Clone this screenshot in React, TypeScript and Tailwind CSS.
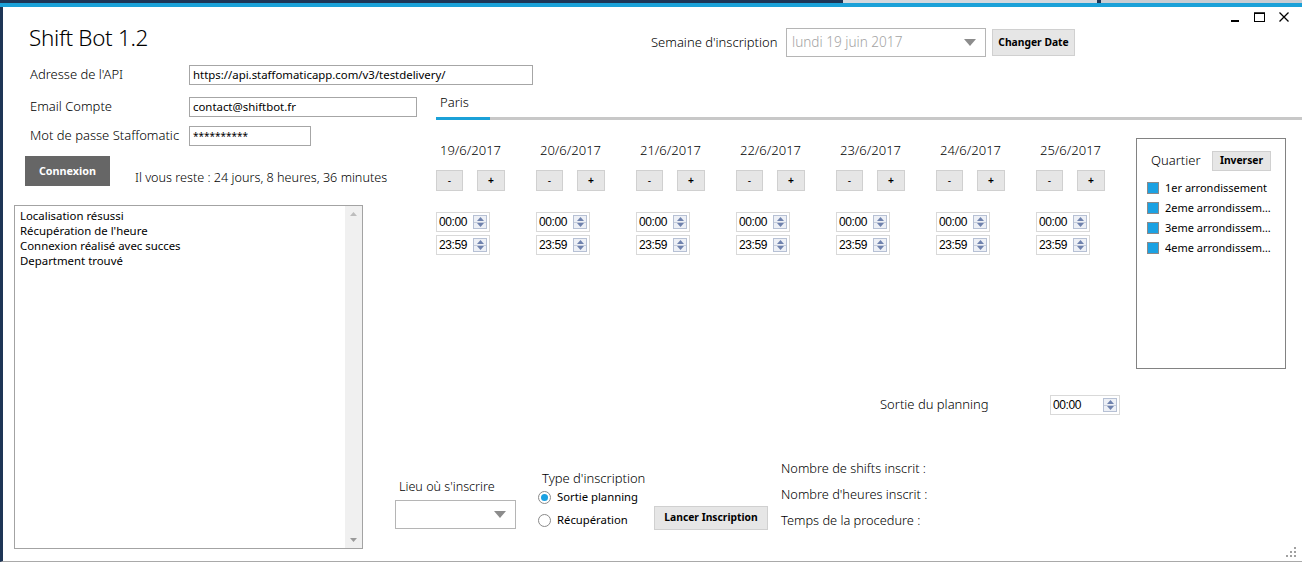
import type { ReactNode } from "react";

const days = ["19/6/2017", "20/6/2017", "21/6/2017", "22/6/2017", "23/6/2017", "24/6/2017", "25/6/2017"];
const quartiers = ["1er arrondissement", "2eme arrondissement", "3eme arrondissement", "4eme arrondissement"];
const logLines = ["Localisation résussi", "Récupération de l'heure", "Connexion réalisé avec succes", "Department trouvé"];

function SpinArrows() {
  return (
    <div className="ml-auto mr-[2px] flex h-[14px] w-[14px] flex-col border border-[#b6c0d4] bg-[#edf0f6]">
      <div className="flex flex-1 items-center justify-center border-b border-[#c3cbdb]">
        <svg width="7" height="4" viewBox="0 0 7 4">
          <path d="M0 4L3.5 0L7 4Z" fill="#6f82ae" />
        </svg>
      </div>
      <div className="flex flex-1 items-center justify-center">
        <svg width="7" height="4" viewBox="0 0 7 4">
          <path d="M0 0L3.5 4L7 0Z" fill="#6f82ae" />
        </svg>
      </div>
    </div>
  );
}

function TimeBox({ value, className = "" }: { value: string; className?: string }) {
  return (
    <div className={`flex h-[20px] shrink-0 items-center border border-[#d9d9d9] bg-white pl-[2px] ${className}`}>
      <span className="font-['Liberation_Sans',sans-serif] text-[12px] tracking-[-0.4px] text-black">{value}</span>
      <SpinArrows />
    </div>
  );
}

function Btn({ children, className = "" }: { children: ReactNode; className?: string }) {
  return (
    <button
      type="button"
      className={`flex shrink-0 items-center justify-center border border-[#d0d0d0] bg-[#e6e6e6] text-[10.3px] font-bold text-black ${className}`}
    >
      {children}
    </button>
  );
}

function ComboArrow() {
  return (
    <svg width="12" height="7" viewBox="0 0 12 7" aria-hidden="true">
      <path d="M0 0H12L6 7Z" fill="#8c8c8c" />
    </svg>
  );
}

function Radio({ checked, label }: { checked?: boolean; label: string }) {
  return (
    <div className="flex h-[20px] items-center">
      <span className="flex h-[13px] w-[13px] items-center justify-center rounded-full border border-[#8a8a8a] bg-white">
        {checked && <span className="h-[7px] w-[7px] rounded-full bg-[#1ba1e2]" />}
      </span>
      <span className="ml-[6px] whitespace-nowrap text-[11.3px] text-black">{label}</span>
    </div>
  );
}

export default function App() {
  return (
    <div className="relative h-[563px] w-[1302px] overflow-hidden bg-white font-['Noto_Sans','Open_Sans',sans-serif] text-black">
      {/* bureau derrière la fenêtre */}
      <div className="flex h-[3px]">
        <div className="w-[843px] bg-[#1e3556]" />
        <div className="w-[254px] bg-[#d4d8de]" />
        <div className="w-[4px] bg-[#1e3556]" />
        <div className="flex-1 bg-[#c9cdd3]" />
      </div>
      <div className="h-[4px] bg-[#1ba1d8]" />

      <div className="flex h-[555px] border-b border-l-[3px] border-b-[#a9a9a9] border-l-[#1e3556]">
        {/* colonne gauche */}
        <div className="flex w-[377px] shrink-0 flex-col">
          <h1 className="ml-[26px] mt-[15px] text-[22.4px] font-light leading-[32px] tracking-[-0.3px]">Shift Bot 1.2</h1>

          <div className="mt-[11px] flex h-[20px] items-center">
            <span className="ml-[27px] w-[159px] shrink-0 whitespace-nowrap text-[13px] font-light">Adresse de l'API</span>
            <div className="flex h-[20px] w-[344px] shrink-0 items-center border border-[#a6a6a6] px-[3px] text-[11.4px]">
              https://api.staffomaticapp.com/v3/testdelivery/
            </div>
          </div>
          <div className="mt-[12px] flex h-[20px] items-center">
            <span className="ml-[27px] w-[159px] shrink-0 whitespace-nowrap text-[13px] font-light">Email Compte</span>
            <div className="flex h-[20px] w-[228px] shrink-0 items-center border border-[#a6a6a6] px-[3px] text-[11.4px]">
              contact@shiftbot.fr
            </div>
          </div>
          <div className="mt-[9px] flex h-[20px] items-center">
            <span className="ml-[27px] w-[159px] shrink-0 whitespace-nowrap text-[13px] font-light">Mot de passe Staffomatic</span>
            <div className="flex h-[20px] w-[122px] shrink-0 items-center border border-[#a6a6a6] px-[3px] text-[10px]">
              **********
            </div>
          </div>

          <div className="mt-[10px] flex items-start">
            <button
              type="button"
              className="ml-[22px] h-[30px] w-[85px] shrink-0 bg-[#666666] text-[10.8px] font-bold text-white"
            >
              Connexion
            </button>
            <span className="ml-[25px] mt-[12px] whitespace-nowrap text-[12.65px] font-light leading-[18px]">
              Il vous reste : 24 jours, 8 heures, 36 minutes
            </span>
          </div>

          <div className="ml-[11px] mt-[19px] flex h-[344px] w-[349px] border border-[#a3a3a3]">
            <div className="flex-1 pl-[5px] pt-[2px] text-[11.4px] leading-[15px]">
              {logLines.map((l) => (
                <div key={l}>{l}</div>
              ))}
            </div>
            <div className="flex w-[17px] flex-col items-center justify-between bg-[#f0f0f0] py-[6px]">
              <svg width="7" height="4" viewBox="0 0 7 4">
                <path d="M0 4L3.5 0L7 4Z" fill="#bdbdbd" />
              </svg>
              <svg width="7" height="4" viewBox="0 0 7 4">
                <path d="M0 0L3.5 4L7 0Z" fill="#9a9a9a" />
              </svg>
            </div>
          </div>
        </div>

        {/* partie droite */}
        <div className="flex flex-1 flex-col">
          <div className="flex h-[20px] items-center justify-end pr-[13px]">
            <svg width="8" height="10" viewBox="0 0 8 10" aria-hidden="true">
              <rect x="0" y="8" width="8" height="2" fill="#000" />
            </svg>
            <svg className="ml-[15px]" width="11" height="10" viewBox="0 0 11 10" aria-hidden="true">
              <rect x="0.5" y="1" width="10" height="8.5" fill="none" stroke="#000" strokeWidth="1" />
              <rect x="0" y="0.5" width="11" height="1.5" fill="#000" />
            </svg>
            <svg className="ml-[14px]" width="10" height="10" viewBox="0 0 10 10" aria-hidden="true">
              <path d="M0.5 0.5L9.5 9.5M9.5 0.5L0.5 9.5" stroke="#000" strokeWidth="1.3" />
            </svg>
          </div>

          <div className="mt-[1px] flex h-[29px] items-center">
            <span className="ml-[271px] w-[135px] shrink-0 whitespace-nowrap text-[13px] font-light">Semaine d'inscription</span>
            <div className="flex h-[29px] w-[200px] shrink-0 items-center border border-[#b5b5b5] pl-[5px] pr-[9px]">
              <span className="flex-1 text-[13.6px] font-light text-[#a3a3a3]">lundi 19 juin 2017</span>
              <ComboArrow />
            </div>
            <Btn className="ml-[6px] h-[27px] w-[83px]">Changer Date</Btn>
          </div>

          <div className="ml-[56px] mt-[36px] flex flex-col">
            <span className="pl-[4px] text-[13px] font-light leading-[18px]">Paris</span>
            <div className="mt-[6px] flex h-[3px]">
              <div className="w-[54px] bg-[#1ba1d8]" />
              <div className="flex-1 bg-[#c8c8c8]" />
            </div>
          </div>

          <div className="ml-[56px] flex">
            {days.map((d) => (
              <div key={d} className="flex w-[100px] shrink-0 flex-col pt-[21px]">
                <span className="pl-[4px] text-[13px] font-light leading-[18px]">{d}</span>
                <div className="mt-[11px] flex">
                  <Btn className="h-[21px] w-[27px] font-normal">-</Btn>
                  <Btn className="ml-[14px] h-[21px] w-[28px]">+</Btn>
                </div>
                <TimeBox value="00:00" className="mt-[21px] w-[54px]" />
                <TimeBox value="23:59" className="mt-[3px] w-[54px]" />
              </div>
            ))}

            <div className="mt-[18px] flex h-[231px] w-[150px] shrink-0 flex-col border border-[#828282]">
              <div className="mt-[12px] flex h-[20px] items-center">
                <span className="ml-[14px] w-[61px] text-[13px] font-light">Quartier</span>
                <Btn className="h-[20px] w-[59px]">Inverser</Btn>
              </div>
              <div className="mt-[7px] flex flex-col">
                {quartiers.map((q) => (
                  <div key={q} className="flex h-[20px] items-center pl-[10px]">
                    <span className="flex h-[12px] w-[12px] shrink-0 items-center justify-center border border-[#8a8a8a] bg-white">
                      <span className="h-[10px] w-[10px] bg-[#1ba1e2]" />
                    </span>
                    <span className="ml-[6px] w-[108px] truncate text-[11px]">{q}</span>
                  </div>
                ))}
              </div>
            </div>
          </div>

          <div className="mt-[26px] flex h-[20px] items-center">
            <span className="ml-[500px] w-[170px] shrink-0 text-[13px] font-light">Sortie du planning</span>
            <TimeBox value="00:00" className="w-[70px]" />
          </div>

          <div className="ml-[15px] mt-[41px] flex items-start">
            <div className="mt-[22px] flex w-[121px] shrink-0 flex-col">
              <span className="whitespace-nowrap pl-[4px] text-[12.6px] font-light leading-[18px]">Lieu où s'inscrire</span>
              <div className="mt-[4px] flex h-[29px] items-center justify-end border border-[#b5b5b5] pr-[9px]">
                <ComboArrow />
              </div>
            </div>

            <div className="ml-[22px] mt-[13px] flex w-[116px] shrink-0 flex-col">
              <span className="whitespace-nowrap pl-[4px] text-[13px] font-light leading-[18px]">Type d'inscription</span>
              <Radio checked label="Sortie planning" />
              <div className="mt-[3px]">
                <Radio label="Récupération" />
              </div>
            </div>

            <Btn className="mt-[50px] h-[24px] w-[114px]">Lancer Inscription</Btn>

            <div className="ml-[13px] flex flex-col whitespace-nowrap text-[12.8px] font-light">
              <span className="flex h-[26px] items-center">Nombre de shifts inscrit :</span>
              <span className="flex h-[26px] items-center">Nombre d'heures inscrit :</span>
              <span className="flex h-[26px] items-center">Temps de la procedure :</span>
            </div>
          </div>
        </div>
      </div>

      {/* poignée de redimensionnement */}
      <svg className="absolute bottom-[5px] right-[5px]" width="12" height="12" viewBox="0 0 12 12" aria-hidden="true">
        <rect x="9" y="1" width="2" height="2" fill="#a0a0a0" />
        <rect x="5" y="5" width="2" height="2" fill="#a0a0a0" />
        <rect x="9" y="5" width="2" height="2" fill="#a0a0a0" />
        <rect x="1" y="9" width="2" height="2" fill="#a0a0a0" />
        <rect x="5" y="9" width="2" height="2" fill="#a0a0a0" />
        <rect x="9" y="9" width="2" height="2" fill="#a0a0a0" />
      </svg>
    </div>
  );
}
